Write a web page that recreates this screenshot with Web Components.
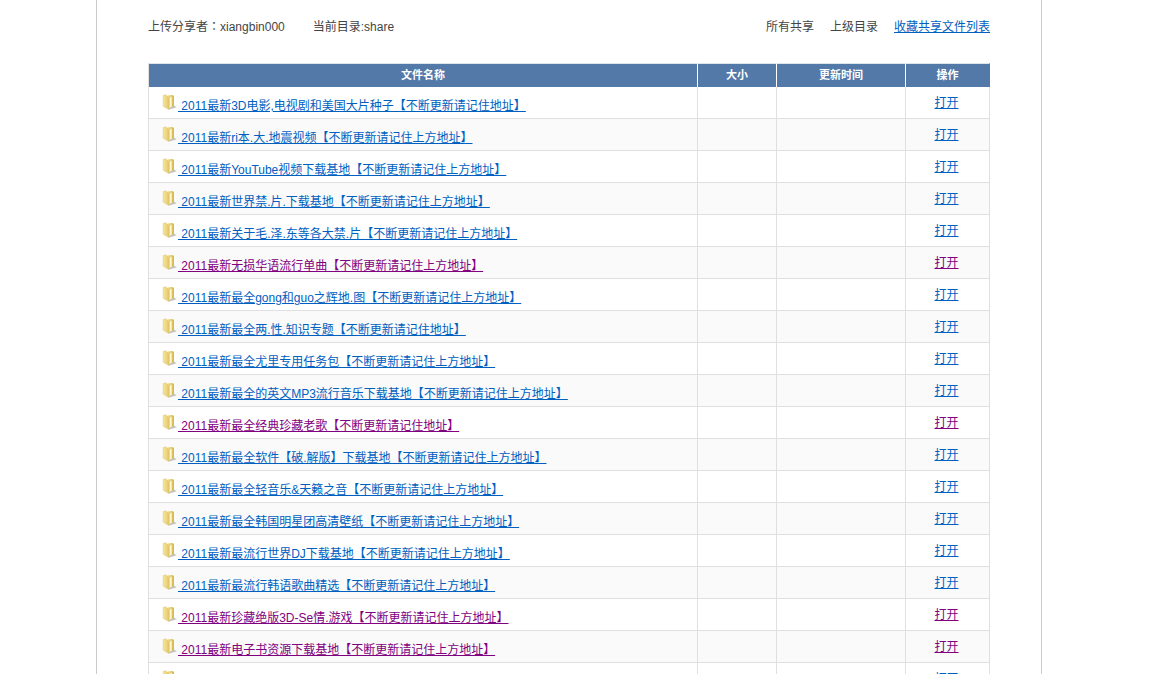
<!DOCTYPE html>
<html lang="zh-CN">
<head>
<meta charset="utf-8">
<title>share</title>
<style>
body { margin: 0; background: #fff; font: 12px/16px "Liberation Sans", "Noto Sans CJK SC", sans-serif; color: #444; }
</style>
</head>
<body>
<share-page>
  <share-header slot="header" user="xiangbin000" folder="share"></share-header>
  <file-table></file-table>
</share-page>

<script>
class SharePage extends HTMLElement {
  constructor() {
    super();
    this.attachShadow({ mode: 'open' }).innerHTML = `
      <style>
        :host { display: block; height: 100vh; overflow: hidden; padding: 0 16px 0 0; box-sizing: border-box; }
        main { max-width: 946px; min-height: 100%; margin: 0 auto; padding: 0 51px; box-sizing: border-box;
               border: solid #ccc; border-width: 0 1px; }
      </style>
      <main><slot name="header"></slot><slot></slot></main>`;
  }
}
customElements.define('share-page', SharePage);

class ShareHeader extends HTMLElement {
  connectedCallback() {
    this.attachShadow({ mode: 'open' }).innerHTML = `
      <style>
        :host { display: flex; justify-content: space-between; padding: 19px 0 28px; white-space: nowrap; }
        div, nav { display: flex; }
        div { gap: 28px; }
        nav { gap: 16px; }
        .colon { font-family: "Noto Sans CJK TC", sans-serif; line-height: 1; }
        a { color: inherit; text-decoration: none; }
        a.save { color: #0060bf; text-decoration: underline; }
      </style>
      <div><span>上传分享者<span class="colon" lang="zh-TW">：</span>${this.getAttribute('user')}</span><span>当前目录:${this.getAttribute('folder')}</span></div>
      <nav><a href="#all">所有共享</a><a href="#up">上级目录</a><a class="save" href="#save">收藏共享文件列表</a></nav>`;
  }
}
customElements.define('share-header', ShareHeader);

class FolderIcon extends HTMLElement {
  constructor() {
    super();
    this.attachShadow({ mode: 'open' }).innerHTML = `
      <style>
        :host { display: block; width: 16px; height: 17px; }
        svg { display: block; }
      </style>
      <svg width="16" height="17" viewBox="0 0 16 17" aria-hidden="true">
        <defs>
          <linearGradient id="f" x1="0" x2="1"><stop offset="0" stop-color="#f7e7a0"/><stop offset="1" stop-color="#e3c55f"/></linearGradient>
          <linearGradient id="b" x1="0" x2="1"><stop offset="0" stop-color="#f3e3a0"/><stop offset="1" stop-color="#d9b648"/></linearGradient>
        </defs>
        <path d="M7 15.5 L14.5 13.5 L12 11.5 L7 12Z" fill="#c4c4c4"/>
        <path d="M5 1.5 L10.5 1 L12 2 V12.6 L7 13.6Z" fill="url(#b)"/>
        <path d="M7.6 4 L9.6 2.6 V12.8 L7.2 14Z" fill="#fff8d8"/>
        <path d="M1.2 1.6 L3.5 .8 L6.6 3.4 Q7.2 4 7.2 5 V15.6 L2 12.8 Q1.2 12.4 1.2 11.6Z" fill="url(#f)" stroke="#dcc06a" stroke-width=".5"/>
      </svg>`;
  }
}
customElements.define('folder-icon', FolderIcon);

const FILES = [
  ['2011最新3D电影,电视剧和美国大片种子【不断更新请记住地址】'],
  ['2011最新ri本.大.地震视频【不断更新请记住上方地址】'],
  ['2011最新YouTube视频下载基地【不断更新请记住上方地址】'],
  ['2011最新世界禁.片.下载基地【不断更新请记住上方地址】'],
  ['2011最新关于毛.泽.东等各大禁.片【不断更新请记住上方地址】'],
  ['2011最新无损华语流行单曲【不断更新请记住上方地址】', true],
  ['2011最新最全gong和guo之辉地.图【不断更新请记住上方地址】'],
  ['2011最新最全两.性.知识专题【不断更新请记住地址】'],
  ['2011最新最全尤里专用任务包【不断更新请记住上方地址】'],
  ['2011最新最全的英文MP3流行音乐下载基地【不断更新请记住上方地址】'],
  ['2011最新最全经典珍藏老歌【不断更新请记住地址】', true],
  ['2011最新最全软件【破.解版】下载基地【不断更新请记住上方地址】'],
  ['2011最新最全轻音乐&amp;天籁之音【不断更新请记住上方地址】'],
  ['2011最新最全韩国明星团高清壁纸【不断更新请记住上方地址】'],
  ['2011最新最流行世界DJ下载基地【不断更新请记住上方地址】'],
  ['2011最新最流行韩语歌曲精选【不断更新请记住上方地址】'],
  ['2011最新珍藏绝版3D-Se情.游戏【不断更新请记住上方地址】', true],
  ['2011最新电子书资源下载基地【不断更新请记住上方地址】', true],
  ['']
];

class FileTable extends HTMLElement {
  constructor() {
    super();
    const rows = FILES.map(([name, seen]) => `
      <tr${seen ? ' class="seen"' : ''}>
        <td><div><folder-icon></folder-icon>${name ? `<a href="#file">&nbsp;${name}</a>` : ''}</div></td>
        <td></td><td></td><td class="open"><a href="#open">打开</a></td>
      </tr>`).join('');
    this.attachShadow({ mode: 'open' }).innerHTML = `
      <style>
        :host { display: block; }
        table { width: 100%; table-layout: fixed; border-collapse: separate; border-spacing: 0; border-left: 1px solid #e0e0e0; }
        .size { width: 79px; } .time { width: 129px; } .act { width: 84px; }
        th { box-sizing: border-box; height: 24px; padding: 0; font-size: 11px; line-height: 23px; color: #fff; background: #5379a9;
             border-top: 1px solid #dde4ee; border-right: 1px solid #fff; }
        th:last-child { border-right-color: #5379a9; }
        td { box-sizing: border-box; height: 32px; padding: 0; vertical-align: top; border: solid #e0e0e0; border-width: 0 1px 1px 0; }
        tr:nth-child(even) td { background: #fafafa; }
        td div { display: flex; align-items: flex-start; padding: 7px 0 0 13px; white-space: nowrap; }
        td div a { margin-top: 4px; }
        .open { padding: 8px 2px 0 0; text-align: center; }
        a { color: #0060bf; text-decoration: underline; }
        .seen a { color: #800080; }
      </style>
      <table>
        <colgroup><col><col class="size"><col class="time"><col class="act"></colgroup>
        <thead><tr><th>文件名称</th><th>大小</th><th>更新时间</th><th>操作</th></tr></thead>
        <tbody>${rows}</tbody>
      </table>`;
  }
}
customElements.define('file-table', FileTable);
</script>
</body>
</html>
